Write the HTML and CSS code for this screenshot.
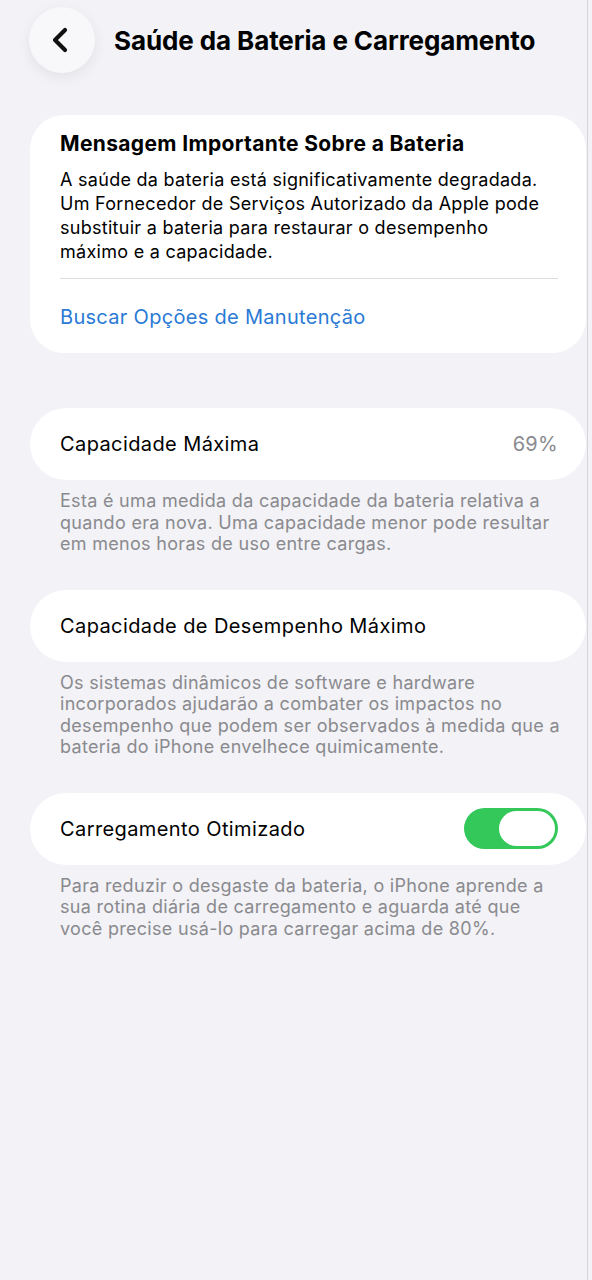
FILE: index.html
```html
<!DOCTYPE html>
<html lang="pt-BR">
<head>
  <meta charset="UTF-8">
  <meta name="viewport" content="width=device-width, initial-scale=1.0">
  <link rel="stylesheet" href="styles.css">
</head>
<body>
  <div class="screen">

    <div class="nav-bar">
      <button class="back-button" aria-label="Voltar">
        <svg width="20" height="26" viewBox="0 0 20 26">
          <path d="M14 3 L4 13 L14 23" fill="none" stroke="#111" stroke-width="4.2" stroke-linecap="round" stroke-linejoin="round"/>
        </svg>
      </button>
      <h1 class="nav-title">Saúde da Bateria e Carregamento</h1>
    </div>

    <div class="card card-message">
      <h2 class="message-title">Mensagem Importante Sobre a Bateria</h2>
      <p class="message-body">A saúde da bateria está significativamente degradada. Um Fornecedor de Serviços Autorizado da Apple pode substituir a bateria para restaurar o desempenho máximo e a capacidade.</p>
      <div class="divider"></div>
      <a class="message-link" href="#">Buscar Opções de Manutenção</a>
    </div>

    <div class="card card-row first-row">
      <span class="row-label">Capacidade Máxima</span>
      <span class="row-value">69%</span>
    </div>
    <p class="footnote">Esta é uma medida da capacidade da bateria relativa a quando era nova. Uma capacidade menor pode resultar em menos horas de uso entre cargas.</p>

    <div class="card card-row">
      <span class="row-label">Capacidade de Desempenho Máximo</span>
    </div>
    <p class="footnote">Os sistemas dinâmicos de software e hardware incorporados ajudarão a combater os impactos no desempenho que podem ser observados à medida que a bateria do iPhone envelhece quimicamente.</p>

    <div class="card card-row">
      <span class="row-label">Carregamento Otimizado</span>
      <span class="toggle on"><span class="toggle-thumb"></span></span>
    </div>
    <p class="footnote">Para reduzir o desgaste da bateria, o iPhone aprende a sua rotina diária de carregamento e aguarda até que você precise usá-lo para carregar acima de 80%.</p>

  </div>
</body>
</html>
```

FILE: styles.css
```css
html, body {
    margin: 0;
    padding: 0;
    background: #f2f2f7;
}

body {
    font-family: Inter, "Liberation Sans", sans-serif;
    color: #000;
}

.screen {
    width: 588px;
    min-height: 1280px;
    box-sizing: border-box;
    border-right: 1px solid #d6d6da;
    padding-top: 7px;
}

.nav-bar {
    display: flex;
    align-items: center;
    padding-left: 29px;
}

.back-button {
    width: 66px;
    height: 66px;
    border: 0;
    border-radius: 50%;
    background: #f8f8fa;
    box-shadow: 0 4px 14px rgba(0, 0, 0, 0.07);
    display: flex;
    align-items: center;
    justify-content: center;
    padding: 0 2px 0 0;
    cursor: pointer;
}

.nav-title {
    margin: 0 0 0 19px;
    font-size: 26px;
    font-weight: 700;
    letter-spacing: -0.1px;
}

.card {
    background: #fff;
    margin-left: 30px;
    width: 556px;
    box-sizing: border-box;
    border-radius: 34px;
    padding: 0 28px 0 30px;
}

.card-message {
    margin-top: 42px;
    padding-top: 17px;
    padding-bottom: 24px;
}

.message-title {
    margin: 0;
    font-size: 21px;
    line-height: 24px;
    font-weight: 700;
    letter-spacing: 0.35px;
}

.message-body {
    margin: 12px 0 0;
    font-size: 18px;
    line-height: 24px;
    letter-spacing: 0.28px;
}

.divider {
    height: 1px;
    background: #dcdce0;
    margin-top: 14px;
}

.message-link {
    display: block;
    margin-top: 26px;
    font-size: 20px;
    line-height: 24px;
    letter-spacing: 0.3px;
    color: #2a7ad6;
    text-decoration: none;
}

.card-row {
    display: flex;
    align-items: center;
    justify-content: space-between;
    height: 72px;
    margin-top: 35px;
    border-radius: 36px;
}

.first-row {
    margin-top: 55px;
}

.row-label {
    font-size: 20px;
    letter-spacing: 0.4px;
}

.row-value {
    font-size: 20px;
    letter-spacing: 0.3px;
    color: #8a8a8e;
}

.footnote {
    margin: 10px 0 0;
    padding: 0 24px 0 60px;
    font-size: 18px;
    line-height: 21.5px;
    letter-spacing: 0.3px;
    color: #8a8a8e;
}

.toggle {
    width: 94px;
    height: 41px;
    border-radius: 21px;
    background: #c9c9ce;
    display: flex;
    align-items: center;
    justify-content: flex-start;
    padding: 0 3px;
    box-sizing: border-box;
}

.toggle.on {
    background: #34c759;
    justify-content: flex-end;
}

.toggle-thumb {
    width: 56px;
    height: 35px;
    border-radius: 18px;
    background: #fff;
}
```
